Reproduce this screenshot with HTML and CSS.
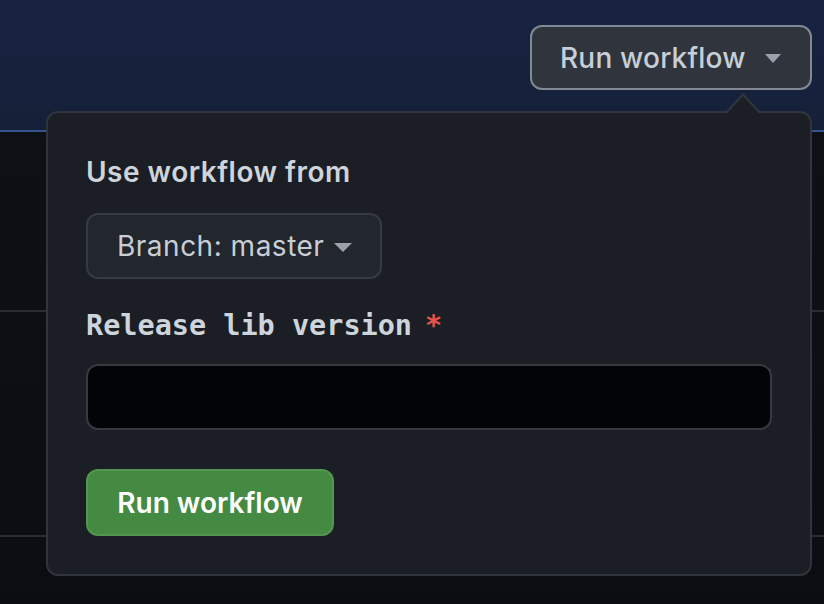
FILE: index.html
```html
<!DOCTYPE html>
<html lang="en">
<head>
<meta charset="utf-8">
<title>Run workflow</title>
<link rel="stylesheet" href="styles.css">
</head>
<body>
<div class="page">
  <header class="hero">
    <div class="dropdown">
      <button class="btn-top" type="button">
        <span>Run workflow</span>
        <svg class="caret" width="16" height="9" viewBox="0 0 16 9"><path d="M0 0h16L8 9z" fill="#9ba1aa"/></svg>
      </button>
      <div class="popover">
        <svg class="arrow" width="38" height="21" viewBox="0 0 38 21"><path d="M1 21L19 1.5L37 21" fill="#1b1e24" stroke="#30363d" stroke-width="2"/><rect x="0" y="20" width="38" height="1" fill="#1b1e24"/></svg>
        <div class="pop-title">Use workflow from</div>
        <button class="btn-branch" type="button">
          <span>Branch: master</span>
          <svg class="caret" width="18" height="9" viewBox="0 0 18 9"><path d="M0 0h18L9 9z" fill="#9ba1aa"/></svg>
        </button>
        <label class="field-label">Release lib version<span class="req">*</span></label>
        <input class="field-input" type="text">
        <button class="btn-run" type="button">Run workflow</button>
      </div>
    </div>
  </header>
  <div class="rows">
    <div class="row row-first"></div>
    <div class="row row-second"></div>
  </div>
</div>
</body>
</html>
```
FILE: styles.css
```css
* { box-sizing: border-box; }
html, body { margin: 0; padding: 0; }
body {
  width: 824px;
  height: 604px;
  overflow: hidden;
  background: #0b0e13;
  font-family: Inter, "Noto Sans", "Liberation Sans", sans-serif;
}
.page {
  width: 824px;
  height: 604px;
  background: linear-gradient(180deg, #0e1117 0%, #0b0d12 100%);
}
.hero {
  height: 132px;
  background: linear-gradient(180deg, #182342 0%, #152038 100%);
  border-bottom: 2px solid #35558f;
  display: flex;
  justify-content: flex-end;
  padding: 25px 12px 0 0;
}
.dropdown {
  position: relative;
  height: 65px;
}
.btn-top {
  height: 65px;
  width: 282px;
  display: flex;
  align-items: center;
  padding: 0 0 0 28px;
  gap: 19px;
  background: #30353d;
  border: 2px solid #838992;
  border-radius: 12px;
  color: #c8ced6;
  font-family: inherit;
  font-size: 28px;
  font-weight: 500;
  letter-spacing: 0.2px;
}
.btn-top .caret { margin-top: 2px; }
.popover {
  position: absolute;
  top: 86px;
  right: 0;
  width: 766px;
  height: 465px;
  background: #1b1e24;
  border: 2px solid #30343b;
  border-radius: 12px;
  padding: 39px 39px 0 38px;
  display: flex;
  flex-direction: column;
  align-items: flex-start;
  z-index: 2;
}
.arrow {
  position: absolute;
  top: -20px;
  right: 48px;
}
.pop-title {
  font-size: 28px;
  line-height: 40px;
  font-weight: 600;
  color: #cdd4dc;
  letter-spacing: 0.5px;
}
.btn-branch {
  margin-top: 21px;
  height: 66px;
  width: 296px;
  display: flex;
  align-items: center;
  gap: 10px;
  padding: 0 0 0 29px;
  background: #22262d;
  border: 2px solid #363b43;
  border-radius: 12px;
  color: #c8ced6;
  font-family: inherit;
  font-size: 28px;
  font-weight: 400;
  letter-spacing: 0.5px;
}
.btn-branch .caret { margin-top: 2px; }
.field-label {
  margin-top: 27px;
  font-family: "DejaVu Sans Mono", "Liberation Mono", monospace;
  font-weight: 700;
  font-size: 28.5px;
  line-height: 40px;
  color: #cdd4dc;
  display: flex;
  align-items: center;
}
.req {
  color: #e5534b;
  margin-left: 13px;
}
.field-input {
  margin-top: 18px;
  width: 686px;
  height: 66px;
  background: #020408;
  border: 2px solid #353a41;
  border-radius: 12px;
  outline: none;
}
.btn-run {
  margin-top: 39px;
  width: 248px;
  height: 67px;
  background: #448a42;
  border: 2px solid #52964f;
  border-radius: 12px;
  color: #ffffff;
  font-family: inherit;
  font-size: 28px;
  font-weight: 600;
  padding: 0;
}
.rows {
  display: flex;
  flex-direction: column;
}
.row {
  border-bottom: 2px solid #282d34;
}
.row-first { height: 180px; }
.row-second { height: 225px; }
```
